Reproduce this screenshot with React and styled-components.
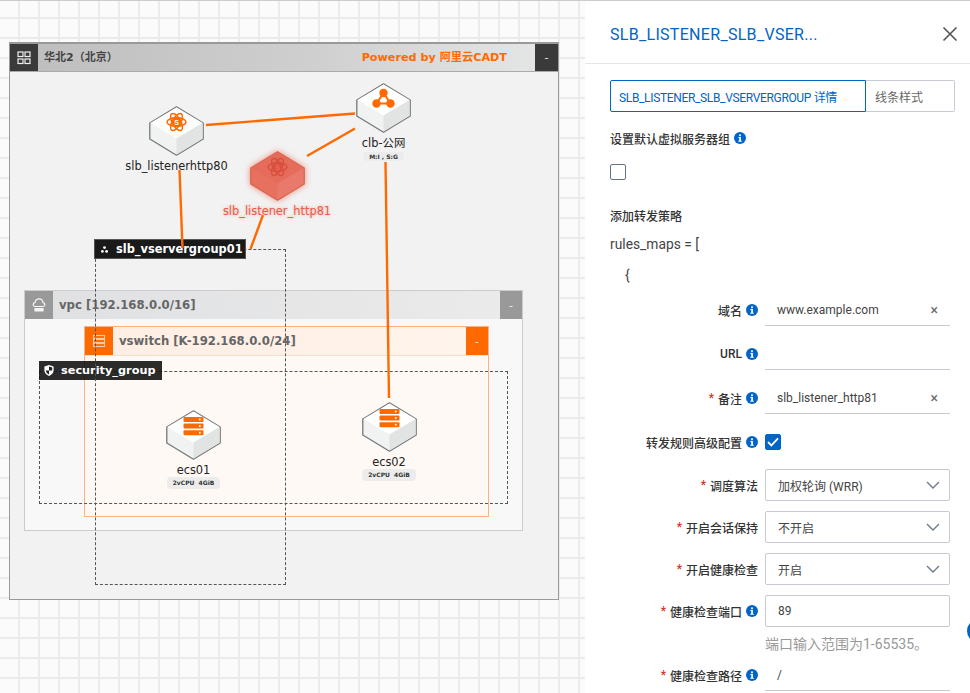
import React from "react";
import styled, { createGlobalStyle } from "styled-components";

const ORANGE = "#ff6a00";
const BLUE = "#0064c8";
const CANVAS_FONT = `"DejaVu Sans", "Noto Sans CJK SC", sans-serif`;

const GlobalStyle = createGlobalStyle`
  html, body {
    margin: 0;
    padding: 0;
    height: 100%;
    overflow: hidden;
    background: #fff;
  }
  * {
    box-sizing: border-box;
  }
`;

const AtomGlyph = ({ color = ORANGE, letter = "#fff" }) => (
  <g fill="none" stroke={color} strokeWidth="1.5">
    <ellipse cx="27.5" cy="16" rx="9.5" ry="4.2" />
    <ellipse cx="27.5" cy="16" rx="9.5" ry="4.2" transform="rotate(60 27.5 16)" />
    <ellipse cx="27.5" cy="16" rx="9.5" ry="4.2" transform="rotate(120 27.5 16)" />
    <circle cx="27.5" cy="16" r="4.6" fill={color} stroke="none" />
    <text
      x="27.5"
      y="18.6"
      fontSize="7"
      fontWeight="700"
      textAnchor="middle"
      fill={letter}
      stroke="none"
      fontFamily="Liberation Sans, sans-serif"
    >
      S
    </text>
  </g>
);

const ClusterGlyph = () => (
  <g>
    <path d="M27.5 10 L20.5 20.5 L34.5 20.5 Z" fill="none" stroke={ORANGE} strokeWidth="2" />
    <circle cx="27.5" cy="10" r="4.2" fill={ORANGE} />
    <circle cx="20.5" cy="20.5" r="4.2" fill={ORANGE} />
    <circle cx="34.5" cy="20.5" r="4.2" fill={ORANGE} />
  </g>
);

const ServerGlyph = () => (
  <g>
    {[7, 13.6, 20.2].map((y) => (
      <g key={y}>
        <rect x="17.5" y={y} width="20" height="5" rx="1" fill={ORANGE} />
        <circle cx="33.8" cy={y + 2.5} r="1" fill="#fff" />
      </g>
    ))}
  </g>
);

const HexBlock = ({ selected, children }) => (
  <HexSvg viewBox="0 0 55 50" $selected={selected}>
    <path
      d="M27.5 .8 L54.2 17 V33 L27.5 49.2 L.8 33 V17 Z"
      fill={selected ? "#e8705f" : "#f1f2f2"}
      stroke={selected ? "#d9634f" : "#77787a"}
      strokeWidth="1.3"
      strokeLinejoin="round"
    />
    <path d="M27.5 1.4 L53.6 17 L27.5 32.5 L1.4 17 Z" fill={selected ? "#e56c5b" : "#fff"} />
    <path d="M27.5 32.5 L53.6 17 V32.7 L27.5 48.6 Z" fill={selected ? "#e9796a" : "#e2e4e3"} />
    {children}
  </HexSvg>
);

const Node = ({ x, top, label, tag, tagSmall, selected, children }) => (
  <NodeWrap $x={x} $top={top}>
    <HexBlock selected={selected}>{children}</HexBlock>
    <NodeLabel $selected={selected}>{label}</NodeLabel>
    {tag && <NodeTag $small={tagSmall}>{tag}</NodeTag>}
  </NodeWrap>
);

const InfoIcon = () => (
  <Info viewBox="0 0 12 12">
    <circle cx="6" cy="6" r="6" fill={BLUE} />
    <rect x="5.1" y="2.4" width="1.8" height="1.8" fill="#fff" />
    <path d="M4.4 5 H6.9 V8.7 H7.8 V9.8 H4.3 V8.7 H5.2 V6.1 H4.4 Z" fill="#fff" />
  </Info>
);

const Chevron = () => (
  <ChevronSvg viewBox="0 0 14 8">
    <path d="M1 1 L7 7 L13 1" fill="none" stroke="#6d7a88" strokeWidth="1.4" />
  </ChevronSvg>
);

const FormRow = ({ label, required, info, children, $after }) => (
  <Row $after={$after}>
    <RowLabel>
      {required && <Star>*</Star>}
      {label}
      {info && <InfoIcon />}
    </RowLabel>
    {children}
  </Row>
);

const App = () => {
  return (
    <>
      <GlobalStyle />
      <Page>
        <Canvas>
          <Region>
            <RegionHeader>
              <HeadIcon $bg="#3a3a3a">
                <svg width="14" height="14" viewBox="0 0 14 14" fill="none" stroke="#eee" strokeWidth="1.2">
                  <rect x="1" y="1" width="5" height="4.5" />
                  <rect x="8" y="1" width="5" height="4.5" />
                  <rect x="1" y="8" width="5" height="4.5" />
                  <rect x="8" y="8" width="5" height="4.5" />
                </svg>
              </HeadIcon>
              <RegionTitle>华北2（北京）</RegionTitle>
              <Powered>Powered by 阿里云CADT</Powered>
              <Collapse $bg="#3a3a3a">-</Collapse>
            </RegionHeader>
          </Region>

          <Vpc>
            <VpcHeader>
              <HeadIcon $bg="#999">
                <svg width="16" height="16" viewBox="0 0 16 16" fill="none" stroke="#f4f4f4" strokeWidth="1.2">
                  <path d="M4 9.5 C1.5 9 1.5 5.8 4 5.6 C4.4 3 6.2 1.8 8 1.8 C10 1.8 11.7 3 12 5.6 C14.5 5.8 14.5 9 12 9.5 Z" />
                  <path d="M4 11.5 H12 V14 H4 Z" fill="#f4f4f4" />
                </svg>
              </HeadIcon>
              <GroupTitle>vpc [192.168.0.0/16]</GroupTitle>
              <Collapse $bg="#999" $narrow>-</Collapse>
            </VpcHeader>
          </Vpc>

          <Vswitch>
            <VswitchHeader>
              <HeadIcon $bg={ORANGE}>
                <svg width="14" height="14" viewBox="0 0 14 14" fill="none" stroke="#ffc9a3" strokeWidth="1.1">
                  <rect x="1.5" y="1.5" width="11" height="3" />
                  <rect x="1.5" y="5.5" width="11" height="3" />
                  <rect x="1.5" y="9.5" width="11" height="3" />
                </svg>
              </HeadIcon>
              <GroupTitle>vswitch [K-192.168.0.0/24]</GroupTitle>
              <Collapse $bg={ORANGE} $narrow>-</Collapse>
            </VswitchHeader>
          </Vswitch>

          <SecurityGroup />
          <SecurityLabel>
            <svg width="10" height="11" viewBox="0 0 10 11">
              <path d="M5 0 L9.6 1.6 V5.4 C9.6 8 7.5 9.8 5 11 C2.5 9.8 .4 8 .4 5.4 V1.6 Z" fill="#fff" />
              <path d="M5 1.4 V5.4 H8.2 V2.5 Z M5 5.4 V9.4 C3.4 8.6 2 7.4 1.8 5.4 Z" fill="#222" />
            </svg>
            security_group
          </SecurityLabel>

          <VserverGroup />
          <VserverLabel>
            <svg width="7" height="7" viewBox="0 0 7 7" fill="#fff">
              <circle cx="3.5" cy="1.6" r="1.4" />
              <circle cx="1.4" cy="5.4" r="1.4" />
              <circle cx="5.6" cy="5.4" r="1.4" />
            </svg>
            slb_vservergroup01
          </VserverLabel>

          <Node x={176.5} top={106} label="slb_listenerhttp80">
            <AtomGlyph />
          </Node>
          <Node x={277} top={151} label="slb_listener_http81" selected>
            <AtomGlyph color="#d9503e" letter="#e8705f" />
          </Node>
          <Node x={383.5} top={83} label="clb-公网" tag="M:I , S:G" tagSmall>
            <ClusterGlyph />
          </Node>
          <Node x={193.5} top={410} label="ecs01" tag="2vCPU  4GiB">
            <ServerGlyph />
          </Node>
          <Node x={389} top={402} label="ecs02" tag="2vCPU  4GiB">
            <ServerGlyph />
          </Node>

          <Wires viewBox="0 0 585 693">
            <line x1="206" y1="125" x2="355" y2="113.5" />
            <line x1="307" y1="156" x2="355" y2="128.5" />
            <line x1="179.5" y1="170" x2="182.5" y2="248" />
            <line x1="263" y1="215" x2="250.5" y2="249" />
            <line x1="385.5" y1="162" x2="389" y2="398" />
          </Wires>
        </Canvas>

        <Panel>
          <PanelHeader>
            <PanelTitle>SLB_LISTENER_SLB_VSER...</PanelTitle>
            <CloseIcon viewBox="0 0 16 16">
              <path d="M1.5 1.5 L14.5 14.5 M14.5 1.5 L1.5 14.5" stroke="#555" strokeWidth="1.6" fill="none" />
            </CloseIcon>
          </PanelHeader>
          <PanelBody>
            <Tabs>
              <Tab $active>SLB_LISTENER_SLB_VSERVERGROUP 详情</Tab>
              <Tab>线条样式</Tab>
            </Tabs>
            <SectionLabel $top={18}>
              设置默认虚拟服务器组
              <InfoIcon />
            </SectionLabel>
            <CheckBox $top={18} />
            <SectionLabel $top={27}>添加转发策略</SectionLabel>
            <CodeLine $top={12}>rules_maps = [</CodeLine>
            <CodeLine $top={13} $indent={15}>{"{"}</CodeLine>

            <Rows>
              <FormRow label="域名" info>
                <LineInput>
                  <span>www.example.com</span>
                  <ClearMark>×</ClearMark>
                </LineInput>
              </FormRow>
              <FormRow label="URL" info>
                <LineInput />
              </FormRow>
              <FormRow label="备注" info required>
                <LineInput>
                  <span>slb_listener_http81</span>
                  <ClearMark>×</ClearMark>
                </LineInput>
              </FormRow>
              <FormRow label="转发规则高级配置" info $after={11}>
                <CheckBox $checked>
                  <svg width="12" height="10" viewBox="0 0 12 10">
                    <path d="M1 5 L4.4 8.4 L11 1.4" fill="none" stroke="#fff" strokeWidth="1.8" />
                  </svg>
                </CheckBox>
              </FormRow>
              <FormRow label="调度算法" required $after={10}>
                <BoxInput>
                  加权轮询 (WRR)
                  <Chevron />
                </BoxInput>
              </FormRow>
              <FormRow label="开启会话保持" required $after={10}>
                <BoxInput>
                  不开启
                  <Chevron />
                </BoxInput>
              </FormRow>
              <FormRow label="开启健康检查" required $after={10}>
                <BoxInput>
                  开启
                  <Chevron />
                </BoxInput>
              </FormRow>
              <FormRow label="健康检查端口" info required $after={0}>
                <BoxInput>89</BoxInput>
              </FormRow>
              <Hint>端口输入范围为1-65535。</Hint>
              <FormRow label="健康检查路径" info required>
                <LineInput>
                  <span>/</span>
                </LineInput>
              </FormRow>
            </Rows>
          </PanelBody>
          <EdgeDot />
        </Panel>
      </Page>
    </>
  );
};

export default App;

// Styled components
const Page = styled.div`
  display: flex;
  width: 970px;
  height: 693px;
  overflow: hidden;
  border-top: 1px solid #ccc;
`;

const Canvas = styled.div`
  position: relative;
  flex: 0 0 585px;
  height: 693px;
  margin-top: -1px;
  background-color: #fbfbfb;
  background-image: linear-gradient(to right, #ececec 2px, transparent 2px),
    linear-gradient(to bottom, #ececec 2px, transparent 2px);
  background-size: 20px 20px;
  background-position: 18px 17px;
  box-shadow: inset 0 1px 0 #d4d4d4;
  font-family: ${CANVAS_FONT};
`;

const Region = styled.div`
  position: absolute;
  left: 9px;
  top: 42px;
  width: 550px;
  height: 558px;
  background: #f2f2f2;
  border: 1px solid #999;
  border-top-width: 2px;
`;

const RegionHeader = styled.div`
  display: flex;
  align-items: stretch;
  height: 28px;
  border-bottom: 1px solid #aaa;
  background: linear-gradient(to right, #bdbdbd, #cfcfcf 55%, #e6e7e7);
`;

const HeadIcon = styled.div`
  flex: 0 0 28px;
  display: flex;
  align-items: center;
  justify-content: center;
  background: ${(p) => p.$bg};
`;

const RegionTitle = styled.div`
  margin-left: 6px;
  flex: 1;
  font-size: 11px;
  font-weight: 700;
  line-height: 28px;
  color: #444;
`;

const Powered = styled.div`
  margin-right: 28px;
  font-size: 11.2px;
  font-weight: 700;
  line-height: 28px;
  color: ${ORANGE};
`;

const Collapse = styled.div`
  flex: 0 0 ${(p) => (p.$narrow ? "22px" : "23px")};
  display: flex;
  align-items: center;
  justify-content: center;
  font-size: 11px;
  color: #eee;
  background: ${(p) => p.$bg};
`;

const Vpc = styled.div`
  position: absolute;
  left: 24px;
  top: 290px;
  width: 499px;
  height: 241px;
  background: #f8f8f8;
  border: 1px solid #ccc;
`;

const VpcHeader = styled.div`
  display: flex;
  height: 28px;
  background: linear-gradient(to right, #dfe0e2, #ebebeb);
`;

const GroupTitle = styled.div`
  flex: 1;
  margin-left: 6px;
  font-size: 11.7px;
  font-weight: 700;
  line-height: 28px;
  color: #666;
  white-space: nowrap;
`;

const Vswitch = styled.div`
  position: absolute;
  left: 84px;
  top: 326px;
  width: 405px;
  height: 191px;
  background: #fff9f6;
  border: 1px solid #ffb27f;
`;

const VswitchHeader = styled.div`
  display: flex;
  height: 29px;
  border-bottom: 1px solid #fbdcc8;
  background: linear-gradient(to right, #ffeee3, #fff4ec);
`;

const SecurityGroup = styled.div`
  position: absolute;
  left: 39px;
  top: 371px;
  width: 469px;
  height: 133px;
  border: 1px dashed #555;
`;

const SecurityLabel = styled.div`
  position: absolute;
  left: 39px;
  top: 361px;
  width: 123px;
  height: 19px;
  display: flex;
  align-items: center;
  gap: 7px;
  padding-left: 5px;
  background: rgba(20, 20, 20, 0.9);
  color: #fff;
  font-size: 11.3px;
  font-weight: 700;
  white-space: nowrap;
`;

const VserverGroup = styled.div`
  position: absolute;
  left: 95px;
  top: 249px;
  width: 191px;
  height: 336px;
  border: 1px dashed #555;
`;

const VserverLabel = styled.div`
  position: absolute;
  left: 94px;
  top: 239px;
  width: 152px;
  height: 20px;
  display: flex;
  align-items: center;
  gap: 8px;
  padding-left: 6px;
  background: #1a1a1a;
  border: 1px solid #555;
  color: #fff;
  font-size: 11.4px;
  font-weight: 700;
  white-space: nowrap;
`;

const NodeWrap = styled.div`
  position: absolute;
  left: ${(p) => p.$x - 70}px;
  top: ${(p) => p.$top}px;
  width: 140px;
  display: flex;
  flex-direction: column;
  align-items: center;
`;

const HexSvg = styled.svg`
  display: block;
  width: 55px;
  height: 50px;
  overflow: visible;
  ${(p) => p.$selected && "filter: drop-shadow(0 0 3px rgba(232, 90, 70, 0.7));"}
`;

const NodeLabel = styled.div`
  margin-top: 3px;
  font-size: 11.4px;
  line-height: 14px;
  white-space: nowrap;
  color: ${(p) => (p.$selected ? "#ea5b48" : "#222")};
  ${(p) => p.$selected && "text-shadow: 0 0 3px rgba(234, 91, 72, 0.5);"}
`;

const NodeTag = styled.div`
  margin-top: ${(p) => (p.$small ? "2px" : "0")};
  height: ${(p) => (p.$small ? "9px" : "12px")};
  padding: 0 6px;
  border-radius: 4px;
  background: #ececec;
  font-size: 6px;
  font-weight: 700;
  line-height: ${(p) => (p.$small ? "9px" : "12px")};
  white-space: pre;
  color: #333;
`;

const Wires = styled.svg`
  position: absolute;
  left: 0;
  top: 0;
  width: 585px;
  height: 693px;
  pointer-events: none;

  line {
    stroke: ${ORANGE};
    stroke-width: 2.4;
  }
`;

const Panel = styled.div`
  position: relative;
  flex: 1;
  background: #fff;
  font-family: Roboto, "Noto Sans CJK SC", sans-serif;
  color: #333;
  overflow: hidden;
`;

const PanelHeader = styled.div`
  display: flex;
  align-items: center;
  justify-content: space-between;
  height: 63px;
  padding: 4px 12px 0 25px;
  border-bottom: 1px solid #e6e6e6;
`;

const PanelTitle = styled.div`
  font-size: 16px;
  letter-spacing: 0.3px;
  color: ${BLUE};
  white-space: nowrap;
`;

const CloseIcon = styled.svg`
  width: 16px;
  height: 16px;
`;

const PanelBody = styled.div`
  padding: 16px 15px 0 25px;
  font-size: 12px;
`;

const Tabs = styled.div`
  display: flex;
  width: 345px;
  height: 32px;
`;

const Tab = styled.div`
  flex: ${(p) => (p.$active ? "0 0 256px" : "1")};
  display: flex;
  align-items: center;
  padding-left: ${(p) => (p.$active ? "8px" : "9px")};
  font-size: 12px;
  letter-spacing: ${(p) => (p.$active ? "-0.34px" : "0")};
  white-space: nowrap;
  color: ${(p) => (p.$active ? BLUE : "#666")};
  border: 1px solid ${(p) => (p.$active ? BLUE : "#c6cad3")};
  ${(p) => !p.$active && "border-left: none;"}
  border-radius: ${(p) => (p.$active ? "2px 0 0 2px" : "0 2px 2px 0")};
`;

const SectionLabel = styled.div`
  display: flex;
  align-items: center;
  height: 16px;
  margin-top: ${(p) => p.$top}px;
  font-weight: 500;
  color: #333;
`;

const Info = styled.svg`
  flex: none;
  width: 12px;
  height: 12px;
  margin-left: 4px;
`;

const CheckBox = styled.div`
  display: flex;
  align-items: center;
  justify-content: center;
  width: 16px;
  height: 16px;
  margin-top: ${(p) => p.$top || 0}px;
  border: 1px solid ${(p) => (p.$checked ? BLUE : "#5f7488")};
  border-radius: 2px;
  background: ${(p) => (p.$checked ? BLUE : "#fff")};
`;

const CodeLine = styled.div`
  height: 18px;
  line-height: 18px;
  margin-top: ${(p) => p.$top}px;
  margin-left: ${(p) => p.$indent || 0}px;
  font-size: 13.8px;
  color: #444;
`;

const Rows = styled.div`
  margin-top: 10px;
`;

const Row = styled.div`
  display: grid;
  grid-template-columns: 148px 185px;
  column-gap: 7px;
  align-items: center;
  margin-bottom: ${(p) => (p.$after === undefined ? 12 : p.$after)}px;
  min-height: 32px;
`;

const RowLabel = styled.div`
  display: flex;
  align-items: center;
  justify-content: flex-end;
  font-weight: 500;
  color: #333;
  white-space: nowrap;
`;

const Star = styled.span`
  margin-right: 4px;
  color: #d93026;
`;

const LineInput = styled.div`
  display: flex;
  align-items: center;
  justify-content: space-between;
  height: 32px;
  padding: 0 12px;
  border-bottom: 1px solid #c6cad3;
  color: #444;
  white-space: nowrap;
`;

const ClearMark = styled.span`
  font-size: 14px;
  line-height: 14px;
  color: #666;
`;

const BoxInput = styled.div`
  display: flex;
  align-items: center;
  justify-content: space-between;
  height: 32px;
  padding: 0 9px 0 12px;
  border: 1px solid #c6cad3;
  border-radius: 2px;
  color: #444;
  white-space: nowrap;
`;

const ChevronSvg = styled.svg`
  width: 14px;
  height: 8px;
`;

const Hint = styled.div`
  margin: 8px 0 6px 155px;
  height: 18px;
  line-height: 18px;
  font-size: 14px;
  color: #999;
  white-space: nowrap;
`;

const EdgeDot = styled.div`
  position: absolute;
  left: 382px;
  top: 618px;
  width: 24px;
  height: 24px;
  border-radius: 50%;
  background: ${BLUE};
`;
